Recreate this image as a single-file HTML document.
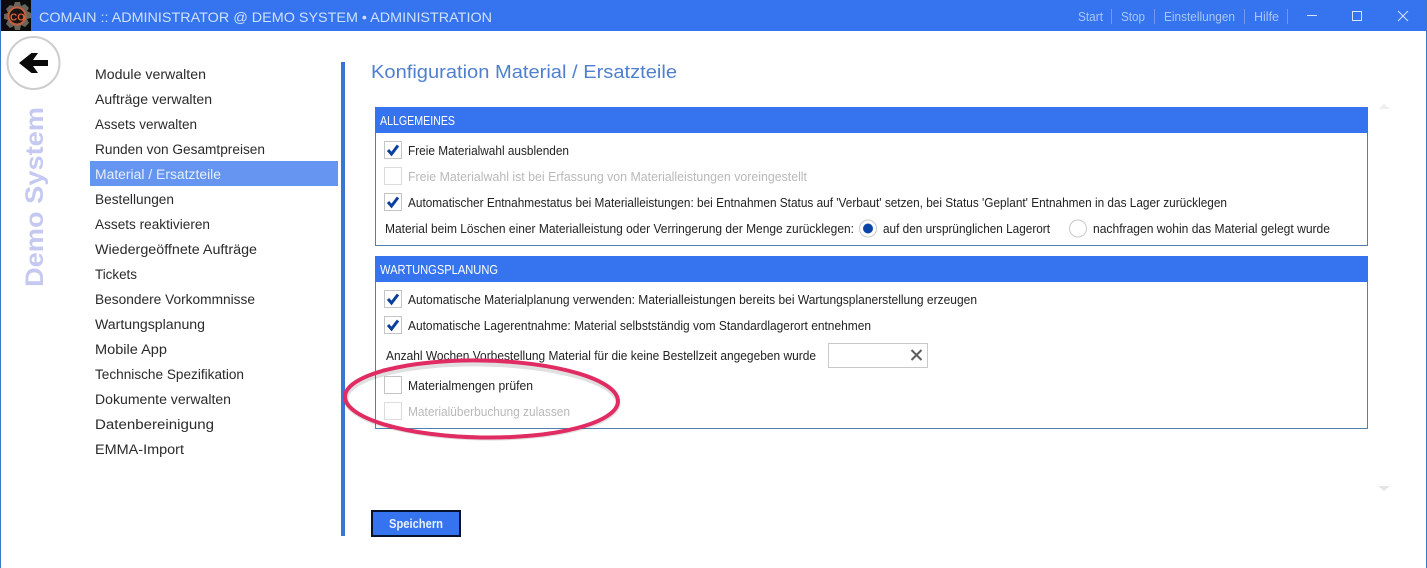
<!DOCTYPE html>
<html lang="de"><head><meta charset="utf-8"><title>COMAIN</title>
<style>
html,body{margin:0;padding:0;background:#fff;width:1427px;height:568px;overflow:hidden}
svg{display:block}
text{font-family:"Liberation Sans",sans-serif;font-size:13px;fill:#222}
.m{font-size:13.5px;fill:#2a2a2a}
.d{fill:#b9b9b9}
.h{fill:#fff;font-size:12.5px}
.n{fill:#a9c6f7;font-size:12.5px}
.cb{fill:#fff;stroke:#c4c4c4;stroke-width:1}
.cd{fill:#fff;stroke:#dcdcdc;stroke-width:1}
.ck{fill:none;stroke:#0b3f9e;stroke-width:3}
</style></head><body>
<svg width="1427" height="568" viewBox="0 0 1427 568" xmlns="http://www.w3.org/2000/svg">
<rect width="1427" height="568" fill="#fff"/>
<rect width="1427" height="31" fill="#3574ee"/>
<rect x="0" y="0" width="1" height="568" fill="#3b78c8"/>
<rect x="1426" y="0" width="1" height="568" fill="#3b78c8"/>
<!-- logo -->
<rect x="1" y="0" width="30" height="31" fill="#0c0c0c"/>
<g transform="translate(17 16)">
<path d="M-2 -14 L3 -14 L4 -10 L8 -12 L12 -8 L10 -5 L14 -3 L14 2 L10 3 L12 7 L8 11 L4 9 L3 14 L-2 14 L-3 10 L-7 12 L-11 8 L-9 4 L-13 3 L-13 -2 L-9 -3 L-11 -7 L-7 -11 L-3.5 -10 Z" fill="#6a655c"/>
<circle r="9" fill="#1a1512"/><circle r="8.500" fill="none" stroke="#c2603f" stroke-width="2"/>
</g>
<text x="10" y="20.500" style="font-size:10px;font-weight:bold;fill:#e8602f" textLength="15" lengthAdjust="spacingAndGlyphs">CO</text>
<text x="39" y="22" style="font-size:14px;fill:#cfe0fb" textLength="453" lengthAdjust="spacingAndGlyphs">COMAIN :: ADMINISTRATOR @ DEMO SYSTEM • ADMINISTRATION</text>
<!-- top nav -->
<text class="n" x="1078" y="21" textLength="25" lengthAdjust="spacingAndGlyphs">Start</text>
<text class="n" x="1121" y="21" textLength="24" lengthAdjust="spacingAndGlyphs">Stop</text>
<text class="n" x="1164" y="21" textLength="71" lengthAdjust="spacingAndGlyphs">Einstellungen</text>
<text class="n" x="1254" y="21" textLength="25" lengthAdjust="spacingAndGlyphs">Hilfe</text>
<g fill="#6f9bf0"><rect x="1111" y="9" width="1" height="15"/><rect x="1154" y="9" width="1" height="15"/><rect x="1244" y="9" width="1" height="15"/><rect x="1287" y="9" width="1" height="15"/></g>
<rect x="1307" y="15" width="10" height="1" fill="#d5e3fb"/>
<rect x="1352.5" y="11.5" width="9" height="9" fill="none" stroke="#d5e3fb"/>
<path d="M1398 11 L1408 21 M1408 11 L1398 21" stroke="#d5e3fb" fill="none"/>
<!-- back button -->
<circle cx="33.500" cy="63" r="26" fill="#fff" stroke="#cdcdcd" stroke-width="2"/>
<path d="M48 60 H33 L38 53 H31.500 L19 63 L31.500 73 H38 L33 66 H48 Z" fill="#0a0a0a"/>
<!-- vertical label -->
<text transform="translate(43 287) rotate(-90)" style="font-size:25px;font-weight:bold;fill:#c5c9f2" textLength="180" lengthAdjust="spacingAndGlyphs">Demo System</text>
<!-- menu -->
<rect x="90" y="161" width="248" height="25" fill="#6695f1"/>
<text class="m" x="95" y="79" textLength="111" lengthAdjust="spacingAndGlyphs">Module verwalten</text>
<text class="m" x="95" y="104" textLength="117" lengthAdjust="spacingAndGlyphs">Aufträge verwalten</text>
<text class="m" x="95" y="129" textLength="102" lengthAdjust="spacingAndGlyphs">Assets verwalten</text>
<text class="m" x="95" y="154" textLength="170" lengthAdjust="spacingAndGlyphs">Runden von Gesamtpreisen</text>
<text class="m" x="95" y="179" style="fill:#e6eefc" textLength="126" lengthAdjust="spacingAndGlyphs">Material / Ersatzteile</text>
<text class="m" x="95" y="204" textLength="79" lengthAdjust="spacingAndGlyphs">Bestellungen</text>
<text class="m" x="95" y="229" textLength="115" lengthAdjust="spacingAndGlyphs">Assets reaktivieren</text>
<text class="m" x="95" y="254" textLength="162" lengthAdjust="spacingAndGlyphs">Wiedergeöffnete Aufträge</text>
<text class="m" x="95" y="279" textLength="42" lengthAdjust="spacingAndGlyphs">Tickets</text>
<text class="m" x="95" y="304" textLength="160" lengthAdjust="spacingAndGlyphs">Besondere Vorkommnisse</text>
<text class="m" x="95" y="329" textLength="110" lengthAdjust="spacingAndGlyphs">Wartungsplanung</text>
<text class="m" x="95" y="354" textLength="72" lengthAdjust="spacingAndGlyphs">Mobile App</text>
<text class="m" x="95" y="379" textLength="149" lengthAdjust="spacingAndGlyphs">Technische Spezifikation</text>
<text class="m" x="95" y="404" textLength="136" lengthAdjust="spacingAndGlyphs">Dokumente verwalten</text>
<text class="m" x="95" y="429" textLength="119" lengthAdjust="spacingAndGlyphs">Datenbereinigung</text>
<text class="m" x="95" y="454" textLength="89" lengthAdjust="spacingAndGlyphs">EMMA-Import</text>
<rect x="341" y="62" width="4" height="474" fill="#3a74d6"/>
<!-- heading -->
<text x="371" y="78" style="font-size:18.500px;fill:#4f7fd0" textLength="306" lengthAdjust="spacingAndGlyphs">Konfiguration Material / Ersatzteile</text>
<!-- scroll arrows -->
<path d="M1379 109 L1384 104 L1390 109 Z" fill="#eeeeee"/>
<path d="M1378 486 L1390 486 L1384 491 Z" fill="#e6e6e6"/>
<!-- group 1 -->
<rect x="375.500" y="107.500" width="992" height="138" fill="#fff" stroke="#4f7fb0"/>
<rect x="375" y="107" width="993" height="26" fill="#3574ee"/>
<text class="h" x="380" y="125" textLength="75" lengthAdjust="spacingAndGlyphs">ALLGEMEINES</text>
<rect class="cb" x="384.500" y="141.500" width="17" height="17"/>
<path class="ck" d="M388 150 L391.500 154 L398 145.500"/>
<text x="408" y="155" textLength="161" lengthAdjust="spacingAndGlyphs">Freie Materialwahl ausblenden</text>
<rect class="cd" x="384.500" y="167.500" width="17" height="17"/>
<text class="d" x="408" y="181" textLength="399" lengthAdjust="spacingAndGlyphs">Freie Materialwahl ist bei Erfassung von Materialleistungen voreingestellt</text>
<rect class="cb" x="384.500" y="193.500" width="17" height="17"/>
<path class="ck" d="M388 202 L391.500 206 L398 197.500"/>
<text x="408" y="207" textLength="819" lengthAdjust="spacingAndGlyphs">Automatischer Entnahmestatus bei Materialleistungen: bei Entnahmen Status auf 'Verbaut' setzen, bei Status 'Geplant' Entnahmen in das Lager zurücklegen</text>
<text x="385" y="233" textLength="469" lengthAdjust="spacingAndGlyphs">Material beim Löschen einer Materialleistung oder Verringerung der Menge zurücklegen:</text>
<circle cx="868" cy="228.500" r="8.500" fill="#fff" stroke="#c9c9c9"/>
<circle cx="868" cy="228.500" r="5" fill="#0b45a8"/>
<text x="883" y="233" textLength="167" lengthAdjust="spacingAndGlyphs">auf den ursprünglichen Lagerort</text>
<circle cx="1078" cy="228.500" r="8.500" fill="#fff" stroke="#c9c9c9"/>
<text x="1093" y="233" textLength="237" lengthAdjust="spacingAndGlyphs">nachfragen wohin das Material gelegt wurde</text>
<!-- group 2 -->
<rect x="375.500" y="256.500" width="992" height="172" fill="#fff" stroke="#4f7fb0"/>
<rect x="375" y="256" width="993" height="26" fill="#3574ee"/>
<text class="h" x="380" y="274" textLength="118" lengthAdjust="spacingAndGlyphs">WARTUNGSPLANUNG</text>
<rect class="cb" x="384.500" y="290.500" width="17" height="17"/>
<path class="ck" d="M388 299 L391.500 303 L398 294.500"/>
<text x="408" y="304" textLength="569" lengthAdjust="spacingAndGlyphs">Automatische Materialplanung verwenden: Materialleistungen bereits bei Wartungsplanerstellung erzeugen</text>
<rect class="cb" x="384.500" y="316.500" width="17" height="17"/>
<path class="ck" d="M388 325 L391.500 329 L398 320.500"/>
<text x="408" y="330" textLength="463" lengthAdjust="spacingAndGlyphs">Automatische Lagerentnahme: Material selbstständig vom Standardlagerort entnehmen</text>
<text x="386" y="360" textLength="430" lengthAdjust="spacingAndGlyphs">Anzahl Wochen Vorbestellung Material für die keine Bestellzeit angegeben wurde</text>
<rect x="828.500" y="343.500" width="99" height="24" fill="#fff" stroke="#c9c9c9"/>
<path d="M911.500 350 L921.500 360 M921.500 350 L911.500 360" stroke="#5f5f5f" stroke-width="2" fill="none"/>
<rect class="cb" x="384.500" y="376.500" width="17" height="17"/>
<text x="408" y="390" textLength="125" lengthAdjust="spacingAndGlyphs">Materialmengen prüfen</text>
<rect class="cd" x="384.500" y="402.500" width="17" height="17"/>
<text class="d" x="408" y="416" textLength="162" lengthAdjust="spacingAndGlyphs">Materialüberbuchung zulassen</text>
<!-- annotation ellipse -->
<ellipse cx="482" cy="401" rx="136" ry="37" fill="none" stroke="#000" stroke-opacity=".12" stroke-width="5" transform="rotate(1 482 401)"/>
<ellipse cx="481.500" cy="399" rx="136.500" ry="38.500" fill="none" stroke="#e12c63" stroke-width="4" transform="rotate(1 482 399)"/>
<!-- save -->
<rect x="372" y="511" width="88" height="25" fill="#3574ee" stroke="#07132e" stroke-width="2"/>
<text x="389" y="528" style="font-size:12.500px;font-weight:bold;fill:#e8f0ff" textLength="54" lengthAdjust="spacingAndGlyphs">Speichern</text>
</svg>
</body></html>
